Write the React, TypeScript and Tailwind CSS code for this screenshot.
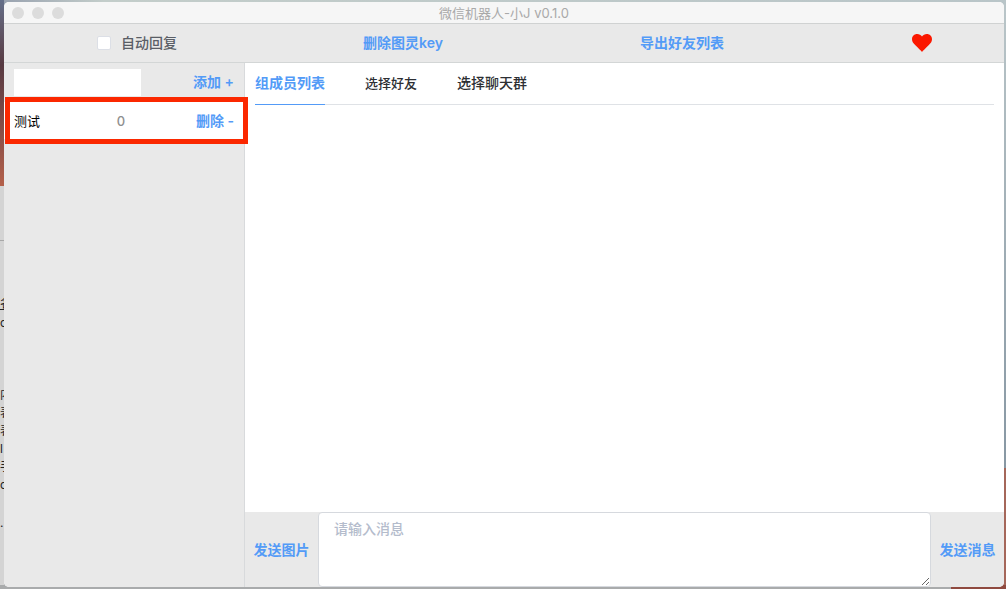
import { useState } from "react";

interface Group {
  name: string;
  count: number;
}

interface Tab {
  label: string;
  size: string;
}

const tabs: Tab[] = [
  { label: "组成员列表", size: "text-[14px]" },
  { label: "选择好友", size: "text-[13px]" },
  { label: "选择聊天群", size: "text-[14px]" },
];

const groups: Group[] = [{ name: "测试", count: 0 }];

// Page of another window, only its edge shows on the left
const backdropText = [
  { text: "名", place: "top-[296px] underline" },
  { text: "o", place: "top-[315px]" },
  { text: "内", place: "top-[387px]" },
  { text: "表", place: "top-[405px]" },
  { text: "表", place: "top-[423px]" },
  { text: "l", place: "top-[441px]" },
  { text: "手", place: "top-[459px]" },
  { text: "o", place: "top-[477px]" },
  { text: ".", place: "top-[515px]" },
];

const linkButton = "text-[14px] font-semibold leading-5 whitespace-nowrap text-[#539bf7] hover:text-[#7ab3fa]";

function Desktop() {
  return (
    <div className="absolute inset-0 overflow-hidden bg-[#a9abac]" aria-hidden="true">
      {/* Left edge */}
      <div className="absolute left-0 top-0 h-[186px] w-1 bg-linear-to-b from-[#65708a] via-[#573a42] via-35% to-[#b4604a]" />
      <div className="absolute left-0 top-[186px] bottom-1 w-1 overflow-hidden bg-[#d4d4d4]">
        <div className="mt-[54px] h-px bg-[#a8a8a8]" />
      </div>
      {backdropText.map((item, i) => (
        <span key={i} className={`absolute left-0 whitespace-nowrap text-[12px] leading-4 text-[#222222] ${item.place}`}>
          {item.text}
        </span>
      ))}
      {/* Top and right edges */}
      <div className="absolute left-1 right-0 top-0 h-2 bg-linear-to-r from-[#9aa3b0] via-[#c3cdca] via-10% to-[#b9c5c8]" />
      <div className="absolute right-0 top-2 h-[460px] w-2 bg-linear-to-b from-[#b9c5c8] to-[#8797a3]" />
      <div className="absolute right-0 top-[468px] bottom-0 w-2 bg-[#a5675a]" />
      <div className="absolute right-0 bottom-0 h-1 w-[55px] bg-[#8f4a40]" />
    </div>
  );
}

function TitleBar() {
  return (
    <header className="relative flex h-[22px] shrink-0 items-center justify-center border-b border-[#d0d2d2] bg-[#f6f6f6]">
      <div className="absolute left-2 flex gap-2">
        <span className="size-3 rounded-full bg-[#dcdcdc]" />
        <span className="size-3 rounded-full bg-[#dcdcdc]" />
        <span className="size-3 rounded-full bg-[#dcdcdc]" />
      </div>
      <h1 className="text-[13px] leading-5 text-[#a9a9a9]">微信机器人-小J v0.1.0</h1>
    </header>
  );
}

function Toolbar() {
  return (
    <div className="grid h-[39px] shrink-0 grid-cols-[278fr_242fr_316fr_164fr] items-center justify-items-center border-b border-[#d3d6d6] bg-[#e9e9e9]">
      <label className="mr-3 flex items-center gap-[10px] text-[14px] font-medium leading-5 text-[#5a5e66]">
        <input
          type="checkbox"
          className="size-[14px] appearance-none rounded-xs border border-[#dcdfe6] bg-white checked:bg-[#539bf7]"
        />
        自动回复
      </label>
      <button className={linkButton}>删除图灵key</button>
      <button className={linkButton}>导出好友列表</button>
      <button aria-label="喜欢">
        <svg viewBox="0 0 20 18" className="h-[18px] w-5 fill-[#fb1800]">
          <path d="M10 18 C9 16.6 6.8 14.6 3.4 11.2 C1.4 9.2 0 7.8 0 5.2 C0 2.2 2.2 0 5.2 0 C7.2 0 9 1 10 2.6 C11 1 12.8 0 14.8 0 C17.8 0 20 2.2 20 5.2 C20 7.8 18.6 9.2 16.6 11.2 C13.2 14.6 11 16.6 10 18 Z" />
        </svg>
      </button>
    </div>
  );
}

function Sidebar() {
  const [name, setName] = useState("");

  return (
    <aside className="w-[241px] shrink-0 border-r border-[#d8dadc] bg-[#e9e9e9]">
      <div className="flex h-[39px] items-center justify-between px-[10px]">
        <input
          type="text"
          aria-label="组名"
          value={name}
          onChange={(e) => setName(e.target.value)}
          className="h-[27px] w-[127px] bg-white px-2 text-[13px] outline-none"
        />
        <button className={`pb-0.5 ${linkButton}`}>添加 +</button>
      </div>
      {groups.map((group) => (
        <div key={group.name} className="relative grid h-[37px] grid-cols-[70px_74px_1fr] items-center bg-white px-[10px]">
          <span className="text-[13px] leading-5 text-black">{group.name}</span>
          <span className="justify-self-center text-[13px] font-medium leading-5 text-[#8f8f8f]">{group.count}</span>
          <button className={`justify-self-end ${linkButton}`}>删除 -</button>
          {/* Highlight frame */}
          <div className="pointer-events-none absolute -top-[5px] -bottom-[5px] left-px -right-1 border-5 border-[#fb2800]" />
        </div>
      ))}
    </aside>
  );
}

function Composer() {
  return (
    <form className="flex h-[75px] shrink-0 bg-[#e9e9e9]" onSubmit={(e) => e.preventDefault()}>
      <button type="button" className={`w-[73px] shrink-0 ${linkButton}`}>发送图片</button>
      <textarea
        aria-label="消息"
        placeholder="请输入消息"
        className="h-full min-w-0 flex-1 resize-y rounded border border-[#d6d9de] bg-white px-[15px] py-[6px] text-[14px] font-medium leading-5 text-[#5a5e66] outline-none placeholder:text-[#b4bccc]"
      />
      <button type="submit" className={`w-[73px] shrink-0 ${linkButton}`}>发送消息</button>
    </form>
  );
}

export default function App() {
  const [active, setActive] = useState(0);

  return (
    <div className="relative h-screen pl-1 pr-0.5 pt-0.5 pb-0.5 font-['Inter','Noto_Sans_CJK_SC',sans-serif]">
      <Desktop />
      <div className="relative flex h-full flex-col overflow-hidden rounded-[5px] bg-white">
        <TitleBar />
        <Toolbar />
        <div className="flex min-h-0 flex-1">
          <Sidebar />
          <main className="flex min-w-0 flex-1 flex-col">
            {/* Tabs */}
            <div role="tablist" className="mx-[10px] flex h-[42px] shrink-0 gap-10 border-b border-[#dfe2e6]">
              {tabs.map((tab, i) => (
                <button
                  key={tab.label}
                  role="tab"
                  aria-selected={i === active}
                  onClick={() => setActive(i)}
                  className={`-mb-px border-b pb-0.5 leading-5 ${tab.size} ${
                    i === active ? "border-[#539bf7] font-semibold text-[#539bf7]" : "border-transparent font-medium text-[#2d2f33]"
                  }`}
                >
                  {tab.label}
                </button>
              ))}
            </div>
            <div role="tabpanel" className="flex-1" />
            <Composer />
          </main>
        </div>
      </div>
    </div>
  );
}
